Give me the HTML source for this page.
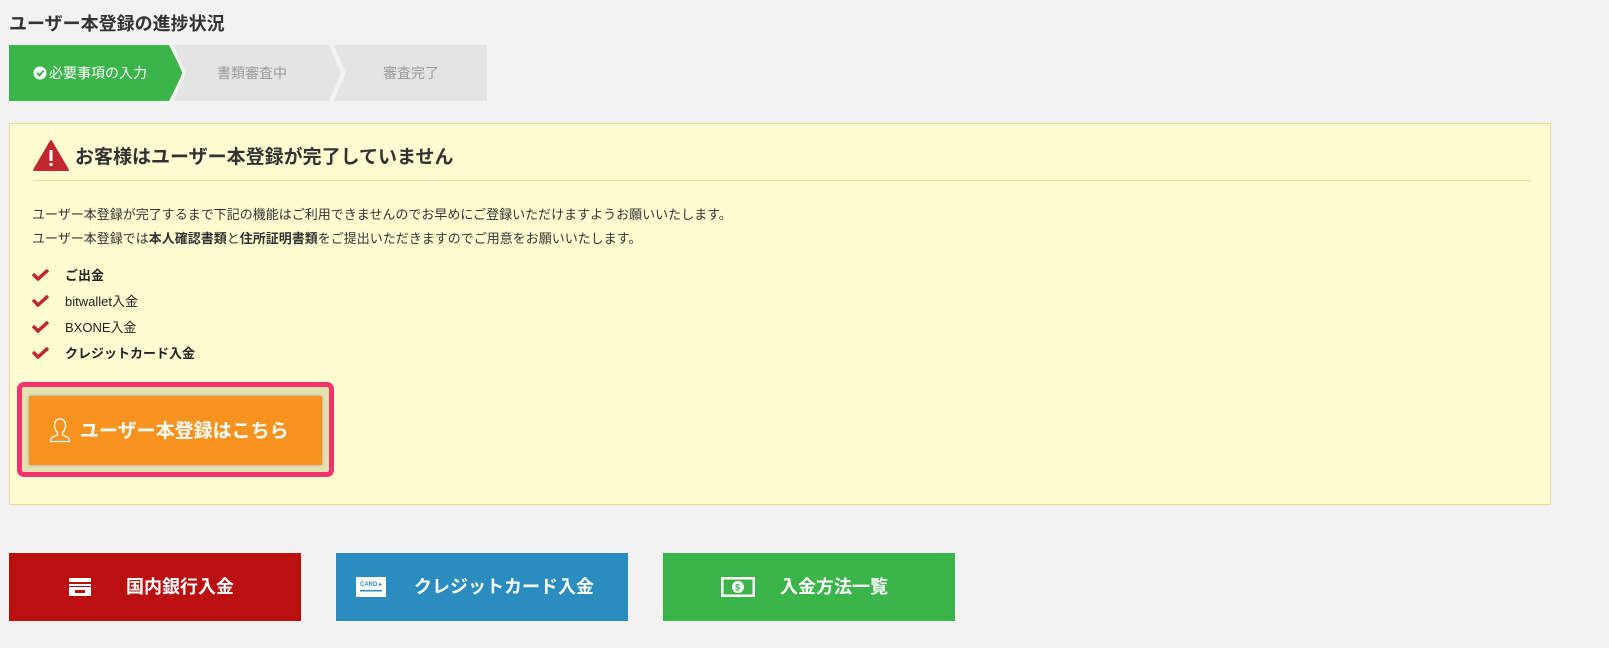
<!DOCTYPE html>
<html><head><meta charset="utf-8"><style>
*{margin:0;padding:0;box-sizing:border-box}
body{width:1609px;height:648px;background:#f2f2f2;font-family:"Liberation Sans","Noto Sans CJK JP",sans-serif;color:#333;position:relative;overflow:hidden}
.abs{position:absolute}
h1{position:absolute;left:9px;top:10px;font-size:18px;font-weight:bold;color:#333}
.step{position:absolute;top:45px;height:56px;line-height:56px;font-size:14px;text-align:center}
.box{position:absolute;left:9px;top:123px;width:1542px;height:382px;background:#fffcd2;border:1px solid #f0d88e}
.p{position:absolute;left:32px;font-size:13px;color:#333}
.li{position:absolute;left:65px;font-size:13px;color:#222}
.ck{position:absolute;left:32px;width:17px;height:12px}
.bb{position:absolute;top:553px;height:68px;width:292px;color:#fff;font-size:18px;font-weight:bold;line-height:68px}
</style></head><body>
<h1>ユーザー本登録の進捗状況</h1>
<svg class="abs" style="left:9px;top:45px" width="480" height="56">
<polygon points="163,0 320,0 332,28 320,56 163,56 175,28" fill="#e4e4e4"/>
<polygon points="323,0 478,0 478,56 323,56 335,28" fill="#e4e4e4"/>
<polygon points="0,0 160,0 174,28 160,56 0,56" fill="#3bb54a"/>
<polyline points="163,0 175,28 163,56" fill="none" stroke="#f4f4f4" stroke-width="3"/>
<polyline points="323,0 335,28 323,56" fill="none" stroke="#f4f4f4" stroke-width="3"/>
<circle cx="31" cy="28" r="6.5" fill="#fff"/><polyline points="28,28 30.5,30.5 34.5,25.5" fill="none" stroke="#3bb54a" stroke-width="2"/>
</svg>
<div class="step" style="left:49px;color:#fff">必要事項の入力</div>
<div class="step" style="left:217px;color:#999">書類審査中</div>
<div class="step" style="left:383px;color:#999">審査完了</div>
<div class="box"></div>
<svg class="abs" style="left:33px;top:140px" width="36" height="31"><polygon points="18,1 35,30 1,30" fill="#c1272d" stroke="#c1272d" stroke-linejoin="round" stroke-width="2"/><rect x="16.5" y="10" width="3" height="11" fill="#fff"/><rect x="16.5" y="23" width="3" height="3" fill="#fff"/></svg>
<div class="abs" style="left:75px;top:142px;font-size:19px;font-weight:bold;color:#333">お客様はユーザー本登録が完了していません</div>
<div class="abs" style="left:33px;top:180px;width:1498px;height:1px;background:#f0d88e"></div>
<div class="p" style="top:204px">ユーザー本登録が完了するまで下記の機能はご利用できませんのでお早めにご登録いただけますようお願いいたします。</div>
<div class="p" style="top:228px">ユーザー本登録では<b>本人確認書類</b>と<b>住所証明書類</b>をご提出いただきますのでご用意をお願いいたします。</div>
<svg class="ck" style="top:269px" viewBox="0 0 17 12"><polyline points="1,5 6,10 16,1" fill="none" stroke="#c1272d" stroke-width="3.5"/></svg>
<svg class="ck" style="top:295px" viewBox="0 0 17 12"><polyline points="1,5 6,10 16,1" fill="none" stroke="#c1272d" stroke-width="3.5"/></svg>
<svg class="ck" style="top:321px" viewBox="0 0 17 12"><polyline points="1,5 6,10 16,1" fill="none" stroke="#c1272d" stroke-width="3.5"/></svg>
<svg class="ck" style="top:347px" viewBox="0 0 17 12"><polyline points="1,5 6,10 16,1" fill="none" stroke="#c1272d" stroke-width="3.5"/></svg>
<div class="li" style="top:265px;font-weight:bold">ご出金</div>
<div class="li" style="top:291px">bitwallet入金</div>
<div class="li" style="top:317px">BXONE入金</div>
<div class="li" style="top:343px;font-weight:bold">クレジットカード入金</div>
<div class="abs" style="left:17px;top:382px;width:317px;height:95px;border:5px solid #f2336d;border-radius:7px;background:#e6e2b0"></div>
<div class="abs" style="left:29px;top:396px;width:293px;height:69px;background:#f7931e;box-shadow:0 0 3px #999"></div>
<svg class="abs" style="left:49px;top:417px" width="22" height="26" viewBox="0 0 22 26"><path d="M11 2c-4 0-5.5 3-5.5 6.5 0 3 1.5 6 3 7v2.5c-3 1-7 2.5-7 5v1.5h19v-1.5c0-2.5-4-4-7-5v-2.5c1.5-1 3-4 3-7C16.5 5 15 2 11 2z" fill="none" stroke="#fff" stroke-width="1.3"/></svg>
<div class="abs" style="left:80px;top:416px;font-size:19px;font-weight:bold;color:#fff">ユーザー本登録はこちら</div>
<div class="bb" style="left:9px;background:#bb1010"><svg class="abs" style="left:59px;top:24px" width="24" height="20"><rect x="1" y="1" width="22" height="18" fill="#fff"/><rect x="1" y="5" width="22" height="2" fill="#bb1010"/><rect x="1" y="9" width="22" height="1" fill="#bb1010"/><rect x="7" y="13" width="10" height="3" fill="#bb1010"/></svg><span class="abs" style="left:117px">国内銀行入金</span></div>
<div class="bb" style="left:336px;background:#2a8cbf"><svg class="abs" style="left:20px;top:24px" width="30" height="20"><rect x="0" y="0" width="30" height="20" fill="#fff"/><text x="4" y="9" font-size="6" fill="#2a8cbf" font-family="Liberation Sans">CARD ▸</text><rect x="4" y="13" width="22" height="1.5" fill="#2a8cbf"/></svg><span class="abs" style="left:78px">クレジットカード入金</span></div>
<div class="bb" style="left:663px;background:#3bb54a"><svg class="abs" style="left:58px;top:24px" width="34" height="20"><rect x="1" y="1" width="32" height="18" fill="none" stroke="#fff" stroke-width="3"/><circle cx="17" cy="10" r="6" fill="#fff"/><text x="14" y="13.5" font-size="9" font-weight="bold" fill="#3bb54a" font-family="Liberation Sans">$</text></svg><span class="abs" style="left:117px">入金方法一覧</span></div>
</body></html>
